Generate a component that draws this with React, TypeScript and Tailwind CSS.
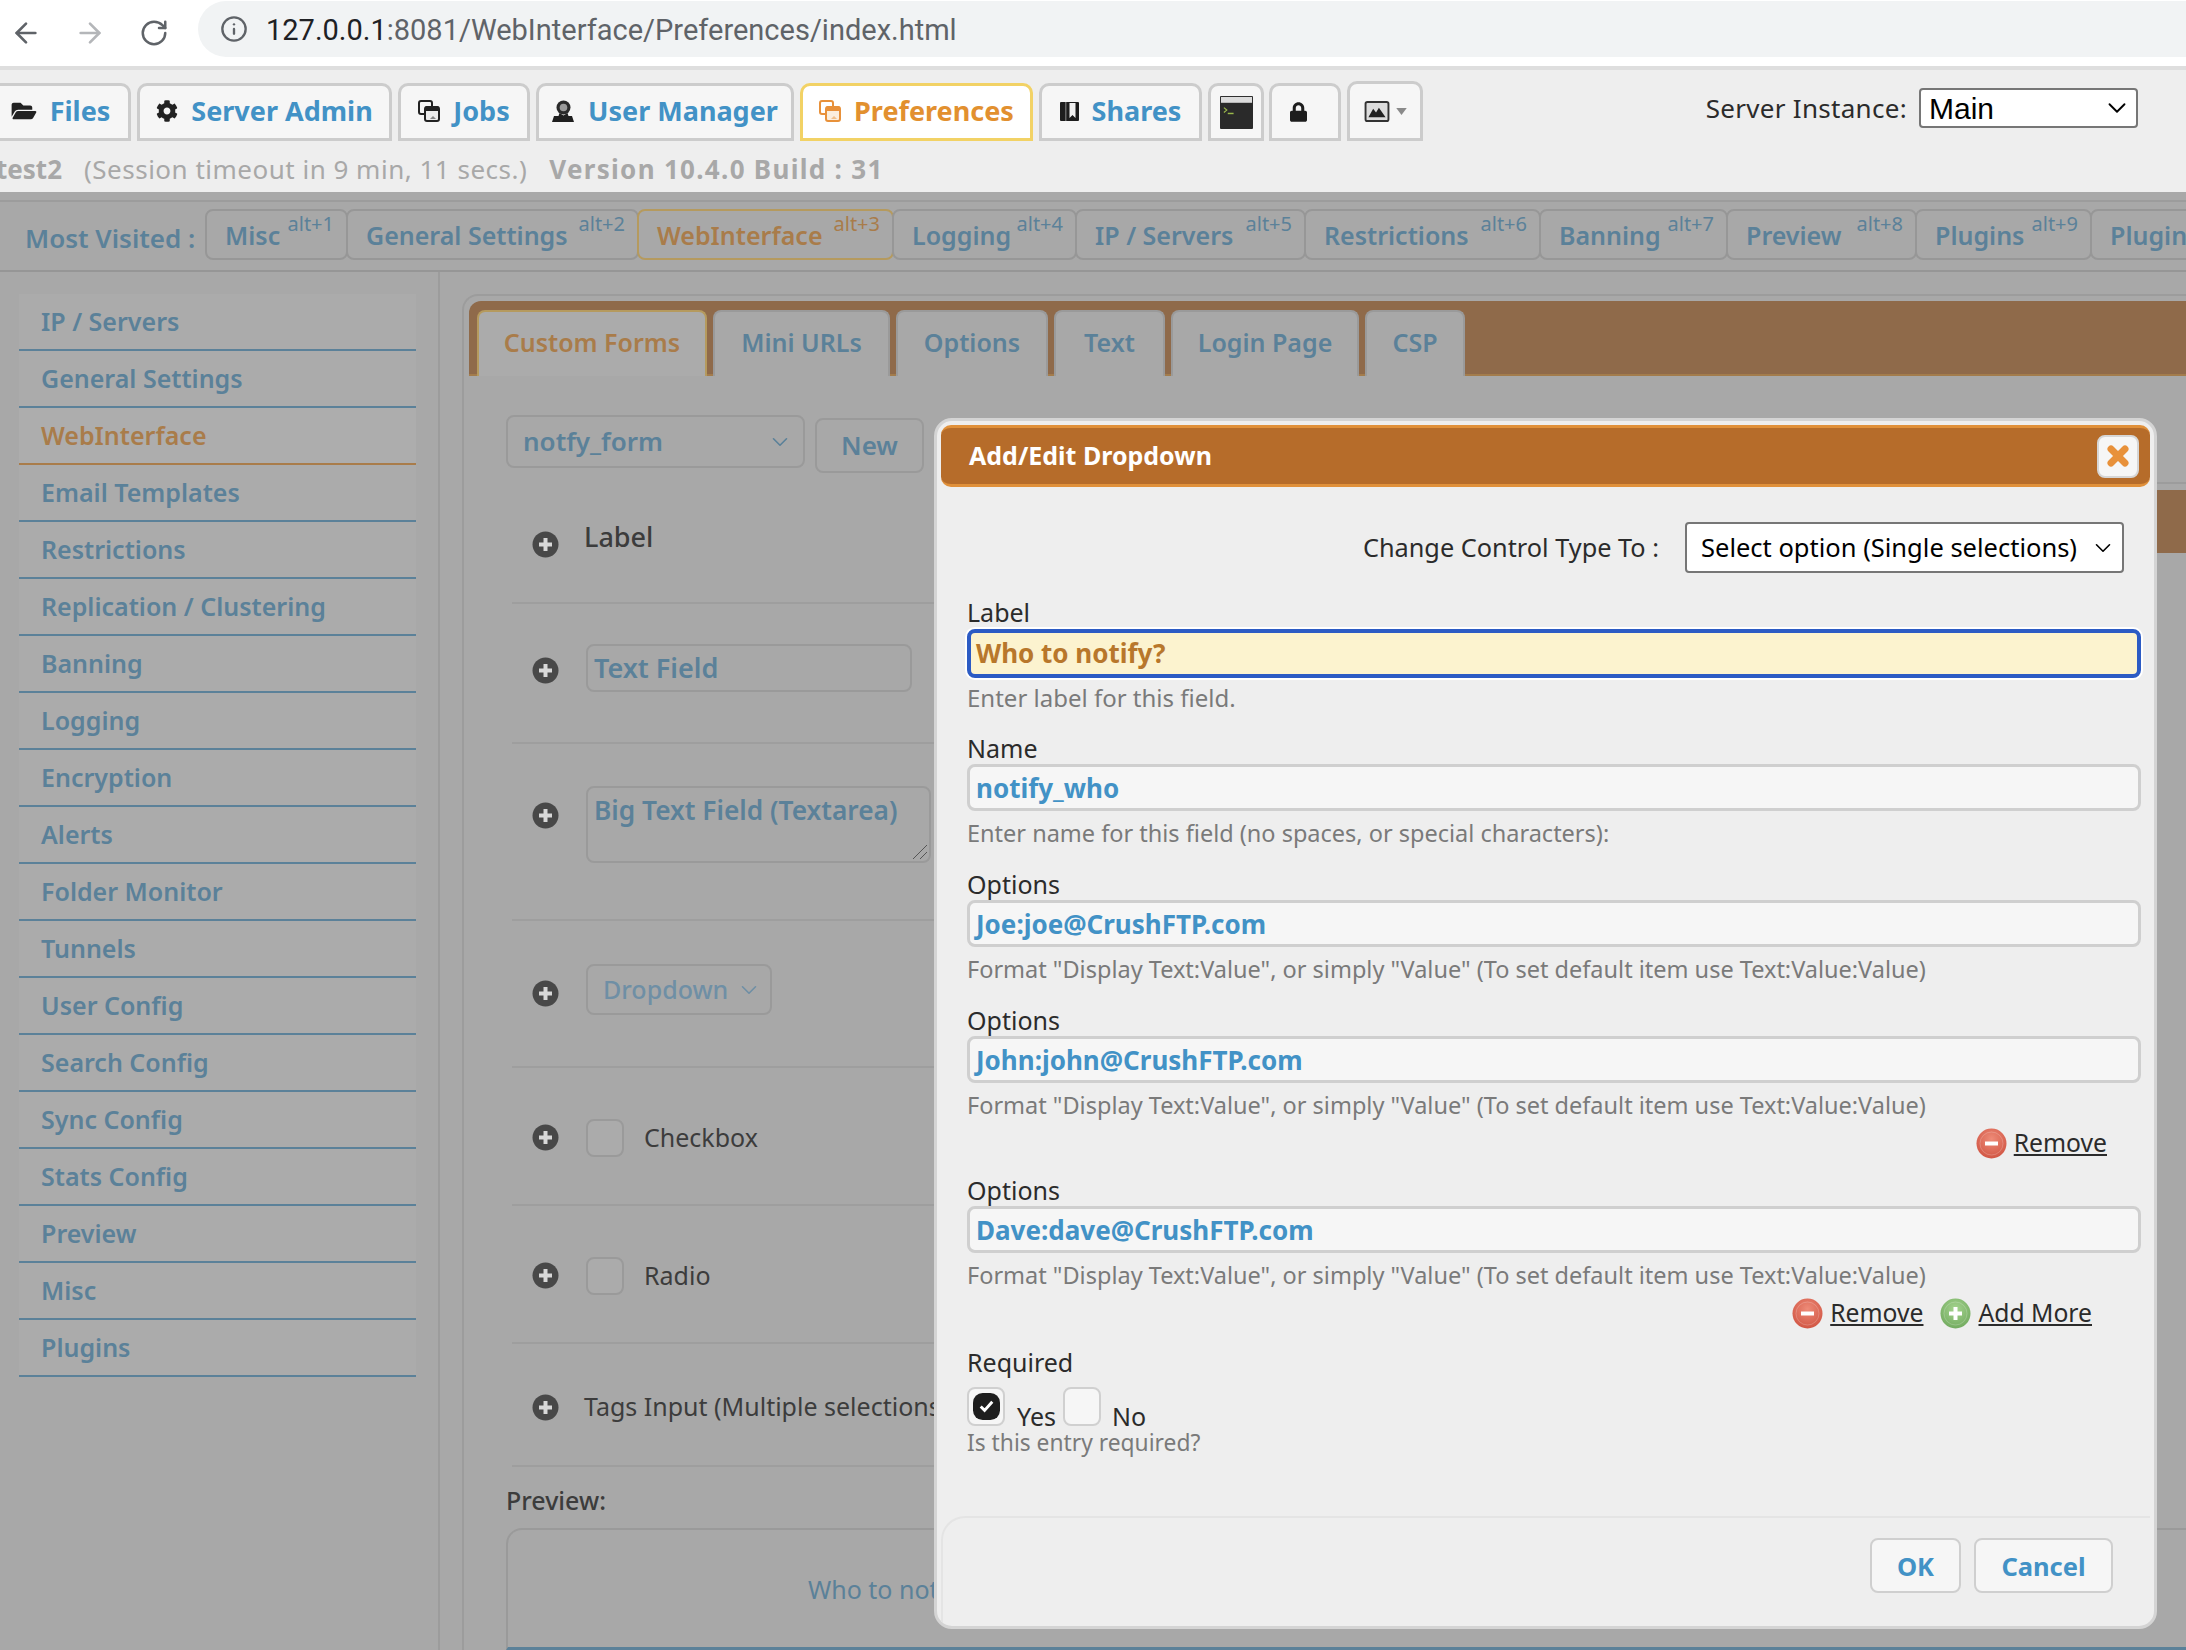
import { ArrowLeft, ArrowRight, RotateCw, Info, ChevronDown, X } from "lucide-react";
import { FaFolderOpen, FaCog, FaLock } from "react-icons/fa";

const navTabs = [
  { label: "Files", width: "w-[141px]", icon: <FaFolderOpen className="w-[26px] h-[22px] text-[#222]" /> },
  { label: "Server Admin", width: "w-[255px]", icon: <FaCog className="w-[22px] h-[22px] text-[#222]" /> },
  { label: "Jobs", width: "w-[132px]", icon: <DocsIcon color="#222" body="#eee" /> },
  { label: "User Manager", width: "w-[258px]", icon: <UserIcon /> },
  { label: "Preferences", width: "w-[233px]", icon: <DocsIcon color="#e8913a" body="#fbeedd" />, active: true },
  { label: "Shares", width: "w-[163px]", icon: <BookIcon /> },
];

const visited = [
  { label: "Misc", alt: "alt+1", width: "w-[143px]" },
  { label: "General Settings", alt: "alt+2", width: "w-[293px]" },
  { label: "WebInterface", alt: "alt+3", width: "w-[257px]", active: true },
  { label: "Logging", alt: "alt+4", width: "w-[185px]" },
  { label: "IP / Servers", alt: "alt+5", width: "w-[231px]" },
  { label: "Restrictions", alt: "alt+6", width: "w-[237px]" },
  { label: "Banning", alt: "alt+7", width: "w-[189px]" },
  { label: "Preview", alt: "alt+8", width: "w-[191px]" },
  { label: "Plugins", alt: "alt+9", width: "w-[177px]" },
  { label: "Plugins", alt: "", width: "w-[120px]" },
];

const sideItems = [
  "IP / Servers", "General Settings", "WebInterface", "Email Templates", "Restrictions",
  "Replication / Clustering", "Banning", "Logging", "Encryption", "Alerts", "Folder Monitor",
  "Tunnels", "User Config", "Search Config", "Sync Config", "Stats Config", "Preview", "Misc", "Plugins",
];

const panelTabs = [
  { label: "Custom Forms", width: "w-[230px]", active: true },
  { label: "Mini URLs", width: "w-[177px]" },
  { label: "Options", width: "w-[152px]" },
  { label: "Text", width: "w-[111px]" },
  { label: "Login Page", width: "w-[188px]" },
  { label: "CSP", width: "w-[100px]" },
];

const FORMAT_HELP = 'Format "Display Text:Value", or simply "Value" (To set default item use Text:Value:Value)';

function DocsIcon({ color, body }: { color: string; body: string }) {
  return (
    <svg viewBox="0 0 22 22" className="w-[22px] h-[22px]" fill="none">
      <rect x="1" y="1" width="13" height="13" rx="2" stroke={color} strokeWidth="2" />
      <rect x="7" y="7" width="14" height="14" rx="2" fill={body} stroke={color} strokeWidth="2" />
      <path d="M7 8a2 2 0 0 1 2-2h10a2 2 0 0 1 2 2v3H7z" fill={color} />
      <path d="M12 19l3-3 3 3z" fill={color} fillOpacity="0.5" />
    </svg>
  );
}

function UserIcon() {
  return (
    <svg viewBox="0 0 23 22" className="w-[23px] h-[22px]">
      <circle cx="11.500" cy="7.500" r="7" fill="#2a2a2a" />
      <circle cx="11.500" cy="7.500" r="3.800" fill="#9a9a9a" />
      <path d="M7.500 13l4 2.500 4-2.500 1 3h3.500l2 6H0l2-6h4.500z" fill="#1f1f1f" />
    </svg>
  );
}

function BookIcon() {
  return (
    <svg viewBox="0 0 19 19" className="w-[19px] h-[19px]">
      <rect width="19" height="19" fill="#1d1d1d" rx="1" />
      <rect x="5" y="0" width="1.500" height="19" fill="#666" />
      <path d="M9.500 1h6v15l-3-3-3 3z" fill="#f2f2f2" />
    </svg>
  );
}

function TerminalIcon() {
  return (
    <svg viewBox="0 0 34 34" className="w-[35px] h-[33px]">
      <rect width="34" height="34" fill="#2a2a2a" rx="1" />
      <rect x="1" y="1" width="32" height="6" fill="#dcdcdc" />
      <path d="M4 12l3 2.500-3 2.500" stroke="#9ab84a" strokeWidth="1.200" fill="none" />
      <path d="M8 18h6" stroke="#9ab84a" strokeWidth="1.500" />
    </svg>
  );
}

function ImageIcon() {
  return (
    <div className="flex items-center gap-[6px]">
      <svg viewBox="0 0 26 22" className="w-[26px] h-[21px]">
        <rect x="1" y="1" width="24" height="20" rx="2" fill="#ddd" stroke="#333" strokeWidth="2" />
        <path d="M4 17l5-9 3 4 3-5 7 10z" fill="#222" />
      </svg>
      <svg viewBox="0 0 12 8" className="w-[11px] h-[7px]">
        <path d="M0 0h12L6 8z" fill="#8a8a8a" />
      </svg>
    </div>
  );
}

function PlusDot() {
  return (
    <svg viewBox="0 0 27 27" className="w-[27px] h-[27px] shrink-0">
      <circle cx="13.500" cy="13.500" r="13" fill="#484848" />
      <path d="M13.500 7v13M7 13.500h13" stroke="#d8d8d8" strokeWidth="4" />
    </svg>
  );
}

function RoundIcon({ type }: { type: "add" | "remove" }) {
  const id = type === "add" ? "addGrad" : "removeGrad";
  const inner = type === "add" ? "#a5d48f" : "#ee8b78";
  const outer = type === "add" ? "#6fa85c" : "#cf5240";
  return (
    <svg viewBox="0 0 31 31" className="w-[31px] h-[31px] shrink-0">
      <defs>
        <radialGradient id={id} cx="50%" cy="35%" r="70%">
          <stop offset="0%" stopColor={inner} />
          <stop offset="100%" stopColor={outer} />
        </radialGradient>
      </defs>
      <circle cx="15.500" cy="15.500" r="15" fill={id === "addGrad" ? "url(#addGrad)" : "url(#removeGrad)"} />
      <circle cx="15.500" cy="15.500" r="11.500" fill="none" stroke="#fff" strokeOpacity="0.2" />
      <path d={type === "add" ? "M15.500 9v13M9 15.500h13" : "M9 15.500h13"} stroke="#fff" strokeWidth="4" />
    </svg>
  );
}

function ActionLink({ type, label }: { type: "add" | "remove"; label: string }) {
  return (
    <span className="flex items-center gap-[7px]">
      <RoundIcon type={type} />
      <span className="underline text-[#2b2b2b] text-[24.700px] leading-[30px]">{label}</span>
    </span>
  );
}

function Field({ label, value, help }: { label: string; value: string; help: string }) {
  return (
    <div className="mt-[14px]">
      <div className="h-[32px] leading-[32px] text-[25px] text-[#2b2b2b]">{label}</div>
      <div className="h-[47px] flex items-center px-[6px] pt-[2px] bg-[#f6f6f6] border-[3px] border-[#cfcfcf] rounded-[8px] text-[26px] font-bold text-[#4292c6]">
        {value}
      </div>
      <div className="h-[43px] flex items-center pt-[3px] text-[23.500px] text-[#7a7a7a] whitespace-nowrap">{help}</div>
    </div>
  );
}

function Modal() {
  return (
    <div className="absolute left-[934px] top-[418px] w-[1223px] h-[1211px] flex flex-col bg-[#eeeeee] border-[3px] border-[#d4d4d4] rounded-[18px] p-[4px]">
      <div className="h-[62px] shrink-0 flex items-center justify-between pl-[28px] pr-[11px] bg-[#b66c2a] border-b-[3px] border-t-[3px] border-[#e0903a] rounded-[10px]">
        <span className="text-white font-bold text-[25px]">Add/Edit Dropdown</span>
        <span className="w-[42px] h-[43px] flex items-center justify-center bg-[#f6f6f6] border-[2px] border-[#d6d6d6] rounded-[8px]">
          <X className="w-[28px] h-[28px] text-[#e8913a]" strokeWidth={6} />
        </span>
      </div>

      <div className="pl-[26px] pr-[9px]">
        <div className="mt-[35px] pr-[17px] flex items-center justify-end gap-[26px]">
          <span className="text-[25.300px] text-[#2b2b2b]">Change Control Type To :</span>
          <span className="w-[439px] h-[51px] flex items-center justify-between pl-[14px] pr-[6px] bg-white border-[2px] border-[#767676] rounded-[4px] text-[25.500px] text-black whitespace-nowrap">
            Select option (Single selections)
            <ChevronDown className="w-[26px] h-[26px]" strokeWidth={1.500} />
          </span>
        </div>

        <div className="mt-[23px] h-[33px] leading-[33px] text-[25px] text-[#2b2b2b]">Label</div>
        <div className="h-[49px] flex items-center px-[5px] bg-[#fcf3cf] border-[4px] border-[#2c5bc4] rounded-[8px] ring-2 ring-white text-[26px] font-bold text-[#b8772b]">
          Who to notify?
        </div>
        <div className="h-[40px] flex items-center text-[24px] text-[#7a7a7a]">Enter label for this field.</div>

        <div className="mt-[3px]">
          <Field label="Name" value="notify_who" help="Enter name for this field (no spaces, or special characters):" />
          <Field label="Options" value="Joe:joe@CrushFTP.com" help={FORMAT_HELP} />
          <Field label="Options" value="John:john@CrushFTP.com" help={FORMAT_HELP} />
          <div className="h-[34px] flex items-center justify-end pr-[34px]">
            <ActionLink type="remove" label="Remove" />
          </div>
          <Field label="Options" value="Dave:dave@CrushFTP.com" help={FORMAT_HELP} />
          <div className="h-[34px] flex items-center justify-end gap-[17px] pr-[49px]">
            <ActionLink type="remove" label="Remove" />
            <ActionLink type="add" label="Add More" />
          </div>
        </div>

        <div className="mt-[16px] h-[32px] leading-[32px] text-[25px] text-[#2b2b2b]">Required</div>
        <div className="mt-[9px] h-[39px] flex items-end text-[25px] leading-[20px] text-[#2b2b2b]">
          <span className="w-[38px] h-[39px] flex items-center justify-center bg-[#f6f6f6] border-[2px] border-[#d0d0d0] rounded-[8px]">
            <svg viewBox="0 0 28 28" className="w-[27px] h-[27px]">
              <rect width="28" height="28" rx="10" fill="#1e1e1e" />
              <path d="M8 14l4 4 8-9" stroke="#fff" strokeWidth="3" fill="none" />
            </svg>
          </span>
          <span className="ml-[12px]">Yes</span>
          <span className="ml-[7px] w-[38px] h-[39px] bg-[#f6f6f6] border-[2px] border-[#d0d0d0] rounded-[8px]" />
          <span className="ml-[11px]">No</span>
        </div>
        <div className="h-[34px] flex items-center text-[22.800px] text-[#7a7a7a]">Is this entry required?</div>
      </div>

      <div className="mt-auto h-[106px] flex items-start justify-end gap-[13px] pt-[20px] pr-[37px] border-t-[2px] border-l-[2px] border-[#e4e4e4] rounded-tl-[24px]">
        <span className="w-[91px] h-[55px] flex items-center justify-center pt-[2px] bg-[#f6f6f6] border-[2px] border-[#cfcfcf] rounded-[8px] text-[25.500px] font-bold text-[#4292c6]">OK</span>
        <span className="w-[139px] h-[55px] flex items-center justify-center pt-[2px] bg-[#f6f6f6] border-[2px] border-[#cfcfcf] rounded-[8px] text-[25.500px] font-bold text-[#4292c6]">Cancel</span>
      </div>
    </div>
  );
}

function FormRows() {
  return (
    <div className="w-[620px] pl-[43px] shrink-0">
      <div className="flex items-start gap-[10px] pt-[39px] ml-[-6px]">
        <span className="w-[299px] h-[53px] flex items-center justify-between pl-[15px] pr-[10px] bg-[#a8a8a8] border-[2px] border-[#9a9a9a] rounded-[8px] text-[26px] font-semibold text-[#5b8199]">
          notfy_form
          <ChevronDown className="w-[26px] h-[26px] text-[#5b8199]" strokeWidth={1.500} />
        </span>
        <span className="mt-[3px] w-[109px] h-[55px] flex items-center justify-center bg-[#a8a8a8] border-[2px] border-[#9a9a9a] rounded-[8px] text-[26px] font-semibold text-[#5b8199]">New</span>
      </div>

      <div className="h-[131px] flex items-center gap-[25px] pl-[20px] border-b-[2px] border-[#9e9e9e]">
        <span className="mt-[14px]"><PlusDot /></span>
        <span className="text-[27px] text-[#3c3c3c] font-medium">Label</span>
      </div>
      <div className="h-[140px] flex items-center gap-[27px] pl-[20px] pb-[6px] border-b-[2px] border-[#9e9e9e]">
        <PlusDot />
        <span className="mb-[4px] w-[326px] h-[48px] flex items-center px-[6px] border-[2px] border-[#9a9a9a] rounded-[8px] text-[27px] font-semibold text-[#5b8199]">Text Field</span>
      </div>
      <div className="h-[177px] flex items-start gap-[27px] pl-[20px] pt-[42px] border-b-[2px] border-[#9e9e9e]">
        <span className="mt-[16px]"><PlusDot /></span>
        <span className="relative w-[345px] h-[77px] px-[6px] pt-[6px] border-[2px] border-[#9a9a9a] rounded-[8px] text-[26.300px] leading-[32px] font-semibold text-[#5b8199] whitespace-nowrap">
          Big Text Field (Textarea)
          <svg viewBox="0 0 14 14" className="absolute right-[2px] bottom-[2px] w-[14px] h-[14px]">
            <path d="M0 14L14 0M7 14l7-7" stroke="#555" strokeWidth="1" />
          </svg>
        </span>
      </div>
      <div className="h-[147px] flex items-center gap-[27px] pl-[20px] border-b-[2px] border-[#9e9e9e]">
        <PlusDot />
        <span className="mb-[8px] w-[186px] h-[51px] flex items-center justify-between pl-[15px] pr-[8px] border-[2px] border-[#9a9a9a] rounded-[8px] text-[25px] font-medium text-[#6f8fa5]">
          Dropdown
          <ChevronDown className="w-[26px] h-[26px]" strokeWidth={1.500} />
        </span>
      </div>
      <div className="h-[138px] flex items-center gap-[27px] pl-[20px] pt-[3px] border-b-[2px] border-[#9e9e9e]">
        <PlusDot />
        <span className="w-[38px] h-[38px] border-[2px] border-[#9a9a9a] rounded-[8px] bg-[#ababab]" />
        <span className="-ml-[7px] text-[25px] text-[#3c3c3c]">Checkbox</span>
      </div>
      <div className="h-[138px] flex items-center gap-[27px] pl-[20px] pt-[3px] border-b-[2px] border-[#9e9e9e]">
        <PlusDot />
        <span className="w-[38px] h-[38px] border-[2px] border-[#9a9a9a] rounded-[8px] bg-[#ababab]" />
        <span className="-ml-[7px] text-[25px] text-[#3c3c3c]">Radio</span>
      </div>
      <div className="h-[123px] flex items-center gap-[25px] pl-[20px] pt-[5px] border-b-[2px] border-[#9e9e9e] whitespace-nowrap">
        <PlusDot />
        <span className="text-[25px] text-[#3c3c3c]">Tags Input (Multiple selections)</span>
      </div>
      <div className="-ml-[6px] mt-[18px] h-[30px] leading-[30px] text-[25px] font-medium text-[#3c3c3c]">Preview:</div>
      <div className="-ml-[6px] mt-[13px] w-[1700px] h-[122px] pl-[300px] pt-[41px] border-[2px] border-b-[3px] border-[#9a9a9a] border-b-[#5b8199] rounded-tl-[16px] text-[25px] text-[#5b8199] whitespace-nowrap">
        Who to notify?
      </div>
    </div>
  );
}

export default function App() {
  return (
    <div className="relative w-[2186px] h-[1650px] overflow-hidden bg-[#a8a8a8] font-['Noto_Sans',sans-serif]">
      <div className="h-[66px] flex items-center bg-white">
        <ArrowLeft className="ml-[10px] w-[32px] h-[32px] text-[#5f6368]" strokeWidth={2} />
        <ArrowRight className="ml-[32px] w-[32px] h-[32px] text-[#b4b6b9]" strokeWidth={2} />
        <RotateCw className="ml-[33px] w-[30px] h-[30px] text-[#5f6368]" strokeWidth={2} />
        <div className="ml-[29px] mb-[8px] flex-1 h-[56px] flex items-center bg-[#f1f3f4] rounded-l-[28px] pl-[22px] font-['Roboto',sans-serif] text-[29px]">
          <Info className="w-[28px] h-[28px] text-[#5f6368]" strokeWidth={2} />
          <span className="ml-[18px] pt-[4px] text-[#202124]">127.0.0.1</span>
          <span className="pt-[4px] text-[#5f6368]">:8081/WebInterface/Preferences/index.html</span>
        </div>
      </div>
      <div className="h-[4px] bg-[#dedede]" />

      <div className="h-[122px] bg-[#eeeeee]">
        <div className="flex items-end h-[71px] -ml-[10px] gap-[6px]">
          {navTabs.map((t) => (
            <div
              key={t.label}
              className={`${t.width} h-[58px] flex items-center justify-center gap-[13px] pb-[2px] border-[3px] border-b-[3px] rounded-t-[10px] text-[27px] font-bold ${
                t.active ? "bg-white border-[#f2d265] text-[#e2902f]" : "bg-[#f6f6f6] border-[#cccccc] text-[#4292c6]"
              }`}
            >
              {t.icon}
              <span>{t.label}</span>
            </div>
          ))}
          <div className="w-[56px] h-[58px] flex items-center justify-center bg-[#f6f6f6] border-[3px] border-[#cccccc] rounded-t-[10px]"><TerminalIcon /></div>
          <div className="w-[72px] h-[58px] -ml-[1px] pr-[14px] flex items-center justify-center bg-[#f6f6f6] border-[3px] border-[#cccccc] rounded-t-[10px]"><FaLock className="w-[17px] h-[22px] text-[#1d1d1d]" /></div>
          <div className="w-[76px] h-[60px] flex items-center justify-center bg-[#f6f6f6] border-[3px] border-[#cccccc] rounded-t-[10px]"><ImageIcon /></div>

          <div className="ml-auto mr-[48px] mb-[13px] flex items-center gap-[12px]">
            <span className="text-[26px] tracking-[0.3px] text-[#2b2b2b]">Server Instance:</span>
            <span className="w-[219px] h-[40px] flex items-center justify-between pl-[8px] pr-[4px] bg-white border-[2px] border-[#767676] rounded-[4px] font-['Liberation_Sans',sans-serif] text-[30px] text-black">
              Main
              <ChevronDown className="w-[30px] h-[30px]" strokeWidth={1.500} />
            </span>
          </div>
        </div>
        <div className="h-[51px] flex items-center pt-[5px] -ml-[4px] text-[26px] text-[#a8a8a8] whitespace-nowrap">
          <span className="font-bold">test2</span>
          <span className="ml-[22px] tracking-[0.5px]">(Session timeout in 9 min, 11 secs.)</span>
          <span className="ml-[22px] font-bold tracking-[1.3px]">Version 10.4.0 Build : 31</span>
        </div>
      </div>

      <div className="h-[80px] pt-[8px] bg-[#a8a8a8] border-b-[2px] border-[#969696]">
        <div className="h-[60px] pt-[7px] border-t-[2px] border-[#9c9c9c]">
          <div className="flex items-center whitespace-nowrap">
            <span className="w-[207px] shrink-0 pl-[25px] pt-[8px] text-[26px] font-semibold text-[#5b8199]">Most Visited :</span>
            {visited.map((v, i) => (
              <div
                key={i}
                className={`${v.width} h-[51px] shrink-0 -ml-[2px] flex items-center justify-between pl-[18px] pr-[12px] border-[2px] rounded-[8px] ${
                  v.active ? "border-[#b59a5e] text-[#a97c4a]" : "border-[#979797] text-[#5b8199]"
                }`}
              >
                <span className="pt-[3px] text-[25px] font-semibold">{v.label}</span>
                <span className="self-start text-[20px] leading-[26px]">{v.alt}</span>
              </div>
            ))}
          </div>
        </div>
      </div>

      <div className="flex h-[1378px]">
        <div className="w-[440px] shrink-0 pl-[19px] pr-[22px] pt-[22px] border-r-[2px] border-[#9c9c9c]">
          {sideItems.map((s) => (
            <div
              key={s}
              className={`h-[57px] flex items-center pl-[22px] border-b-[2px] text-[25px] font-semibold ${
                s === "WebInterface" ? "bg-[#adadad] text-[#a97c4a] border-[#a97c4a]" : "bg-[#ababab] text-[#5b8199] border-[#5b8199]"
              }`}
            >
              {s}
            </div>
          ))}
        </div>

        <div className="flex-1 ml-[22px] mt-[22px] pl-[5px] pt-[5px] border-t-[2px] border-l-[2px] border-[#9c9c9c] rounded-tl-[16px]">
          <div className="h-[75px] flex items-end gap-[6px] pl-[8px] bg-[#8f6a4a] border-b-[2px] border-[#a37c4c] rounded-tl-[12px]">
            {panelTabs.map((t) => (
              <div
                key={t.label}
                className={`${t.width} h-[66px] -mb-[2px] flex items-center justify-center pb-[2px] rounded-t-[8px] border-t-[2px] border-x-[2px] text-[25px] font-semibold ${
                  t.active ? "bg-[#ababab] border-[#b59a5e] text-[#a97c4a]" : "bg-[#a8a8a8] border-[#9a9a9a] text-[#5b8199]"
                }`}
              >
                {t.label}
              </div>
            ))}
          </div>
          <div className="flex">
            <FormRows />
            <div className="flex-1 mt-[106px] pt-[6px] border-t-[2px] border-[#9c9c9c]">
              <div className="h-[63px] bg-[#8f6a4a]" />
            </div>
          </div>
        </div>
      </div>

      <Modal />
    </div>
  );
}
